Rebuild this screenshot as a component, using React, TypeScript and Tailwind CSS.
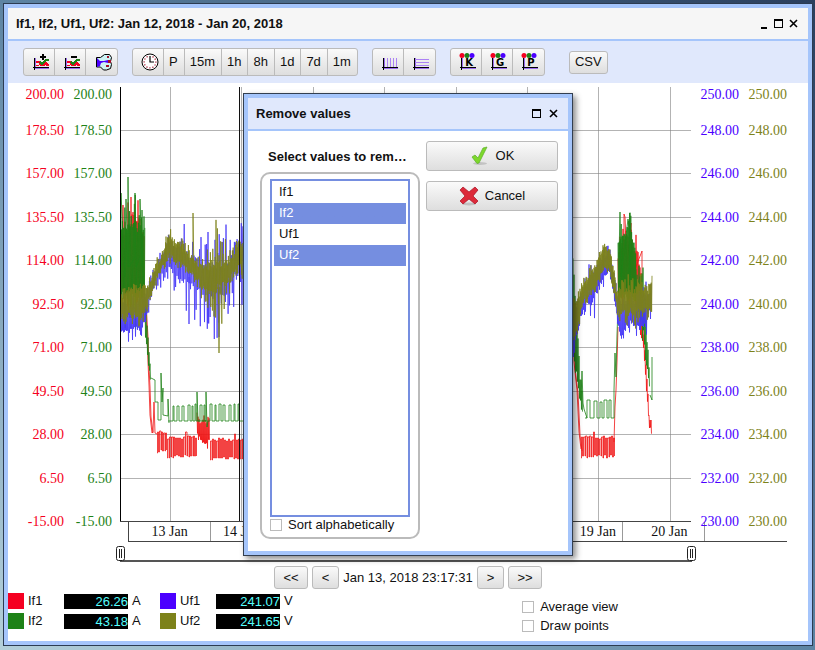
import React, { useState } from 'react';

const RED = '#f50021';
const GREEN = '#1e8217';
const BLUE = '#4b00ff';
const OLIVE = '#7d821a';

const currentTicks = ['200.00', '178.50', '157.00', '135.50', '114.00', '92.50', '71.00', '49.50', '28.00', '6.50', '-15.00'];
const voltageTicks = ['250.00', '248.00', '246.00', '244.00', '242.00', '240.00', '238.00', '236.00', '234.00', '232.00', '230.00'];
const dayLabels = [
  { label: '13 Jan', className: 'col-start-1' },
  { label: '14 Jan', className: 'col-start-2' },
  { label: '19 Jan', className: 'col-start-7' },
  { label: '20 Jan', className: 'col-start-8' },
];

// ---- chart data ----

// [x, top, bottom, jitter] key points of a noisy signal
type Band = [number, number, number, number][];
type Line = [number, number][];

const random = (seed: number) => {
  let s = seed;
  return () => {
    s = (s * 1103515245 + 12345) % 2147483648;
    return s / 2147483648;
  };
};

const noise = (band: Band, seed: number, step = 0.5) => {
  const rnd = random(seed);
  const points: string[] = [];
  let up = true;
  for (let i = 0; i < band.length - 1; i++) {
    const [x0, t0, b0, j0] = band[i];
    const [x1, t1, b1, j1] = band[i + 1];
    for (let x = x0; x < x1; x += step) {
      const k = (x - x0) / (x1 - x0);
      const jitter = j0 + (j1 - j0) * k;
      const edge = up ? t0 + (t1 - t0) * k : b0 + (b1 - b0) * k;
      const swing = jitter * Math.pow(rnd(), 3);
      const y = up ? edge + 4 - rnd() * 6 - swing : edge - 4 + rnd() * 6 + swing;
      points.push(`${x.toFixed(1)} ${y.toFixed(1)}`);
      up = !up;
    }
  }
  return 'M' + points.join('L');
};

const line = (points: Line) => 'M' + points.map(([x, y]) => `${x} ${y}`).join('L');

// square pulses on a base line
const pulses = (from: number, to: number, base: number, top: number, seed: number) => {
  const rnd = random(seed);
  let d = `M${from} ${base}`;
  let x = from;
  while (x < to - 5) {
    x += 2 + Math.round(rnd() * 3);
    d += `H${x}V${top + Math.round(rnd() * 2)}`;
    x += 1 + Math.round(rnd() * 2);
    d += `H${x}V${base}`;
  }
  return d + `H${to}`;
};

// fast on/off switching, drawn as a comb
const comb = (from: number, to: number, top: number, bottom: number, seed: number) => {
  const rnd = random(seed);
  let d = `M${from} ${bottom}`;
  for (let x = from; x < to; x += 2) {
    const high = rnd() > 0.92 ? top - 7 : top - Math.round(rnd() * 3);
    d += `H${x + 0.5}V${high}H${x + (rnd() > 0.35 ? 1.5 : 2)}V${bottom - Math.round(rnd() * 3)}`;
  }
  return d;
};

const redPaths = [
  noise([[0, 155, 205, 35], [14, 130, 205, 40], [25, 150, 215, 20]], 7),
  line([[25, 215], [27, 248], [28, 275], [29, 298], [30, 328], [32, 346], [33, 345], [34, 315], [35, 346], [37, 347]]),
  line([[26, 215], [28, 250], [29, 280], [30, 300], [31, 330], [33, 346]]),
  comb(37, 47, 347, 366, 21),
  comb(47, 77, 352, 371, 22),
  noise([[77, 332, 350, 12], [90, 336, 354, 6]], 23),
  comb(90, 123, 354, 373, 24),
  line([[453, 230], [454, 275], [457, 303], [459, 345], [461, 362]]),
  line([[454, 240], [455, 282], [458, 306], [460, 348], [462, 364]]),
  comb(461, 494, 352, 371, 25),
  line([[494, 355], [495, 320], [496, 303], [497, 275], [498, 240]]),
  noise([[498, 170, 205, 30], [506, 150, 205, 25], [516, 165, 210, 25], [522, 190, 235, 20]], 26),
  line([[504, 190], [504, 127], [505, 130], [507, 180], [511, 136], [512, 190], [522, 164], [522, 230]]),
  noise([[520, 225, 245, 5], [524, 250, 265, 6], [527, 290, 310, 6], [529, 325, 338, 4], [532, 340, 348, 1]], 27),
];

const greenPaths = [
  noise([[0, 145, 205, 30], [12, 138, 205, 42], [25, 145, 215, 30]], 3, 0.4),
  line([[1, 180], [1, 106], [5, 190], [6, 112], [8, 180], [8, 90], [9, 180], [15, 170], [15, 106], [16, 180], [20, 170], [20, 112], [22, 180], [22, 123], [23, 200]]),
  noise([[25, 210, 240, 10], [28, 250, 275, 6], [31, 285, 294, 3]], 5),
  line([[31, 291], [35, 293], [35, 315], [38, 315], [38, 333], [41, 333], [41, 305], [41, 286], [42, 315], [43, 301], [43, 328], [48, 329], [48, 312], [49, 336]]),
  pulses(48, 123, 334, 317, 31),
  line([[77, 334], [77, 305], [78, 334], [86, 334], [86, 305], [87, 340], [88, 334]]),
  noise([[453, 190, 250, 20], [457, 230, 290, 10], [460, 290, 315, 6], [463, 310, 325, 4]], 33),
  line([[461, 313], [462, 284], [463, 316], [464, 322], [467, 331]]),
  pulses(465, 494, 331, 313, 43),
  line([[494, 331], [494, 303], [495, 266], [496, 290], [497, 248], [498, 220]]),
  noise([[498, 155, 210, 10], [502, 150, 208, 20], [510, 143, 208, 20], [516, 165, 215, 8]], 34, 0.4),
  line([[499, 170], [500, 125], [501, 190], [508, 132], [509, 140], [510, 190]]),
  noise([[516, 195, 220, 12], [523, 185, 240, 20], [526, 240, 270, 8], [530, 290, 308, 4]], 35),
  line([[530, 308], [532, 313], [532, 270]]),
];

const bluePaths = [
  noise([[0, 215, 238, 8], [8, 220, 246, 12], [20, 215, 242, 10], [28, 205, 225, 12]], 11),
  noise([[28, 203, 225, 6], [33, 190, 205, 8], [40, 175, 190, 14], [50, 155, 182, 16], [60, 165, 192, 30], [74, 172, 198, 36], [88, 180, 212, 40], [106, 180, 205, 50], [115, 160, 185, 40], [123, 160, 195, 30]], 12, 0.7),
  line([[69, 190], [69, 237], [69, 180]]),
  line([[88, 190], [88, 236], [88, 190]]),
  line([[99, 200], [99, 250], [99, 200]]),
  noise([[453, 235, 270, 10], [458, 215, 240, 12], [465, 198, 215, 26], [473, 188, 210, 30], [481, 172, 195, 18], [489, 168, 185, 14], [493, 185, 202, 12], [497, 205, 230, 10]], 13),
  noise([[497, 210, 235, 8], [501, 220, 248, 12], [510, 215, 235, 14], [520, 215, 240, 20], [526, 210, 235, 20], [532, 200, 220, 10]], 14),
];

const olivePaths = [
  noise([[0, 210, 230, 12], [10, 205, 226, 12], [20, 200, 232, 12], [28, 200, 220, 10]], 15, 0.4),
  noise([[28, 200, 215, 6], [34, 183, 198, 8], [40, 172, 185, 8], [46, 158, 175, 8], [49, 145, 168, 6], [54, 160, 174, 8], [62, 155, 175, 8], [68, 165, 184, 8], [75, 176, 190, 8], [88, 182, 205, 22], [97, 175, 200, 45], [106, 180, 198, 35], [114, 170, 185, 12], [119, 155, 174, 8], [123, 158, 185, 8]], 16, 0.4),
  line([[73, 180], [73, 126], [74, 190]]),
  line([[98, 200], [99, 266], [100, 200]]),
  noise([[453, 215, 255, 8], [458, 212, 235, 10], [463, 195, 215, 6], [470, 188, 205, 8], [477, 176, 198, 6], [483, 160, 182, 5], [489, 163, 180, 5], [493, 180, 200, 4], [497, 205, 222, 6]], 17, 0.4),
  noise([[497, 205, 228, 6], [510, 205, 225, 22], [522, 200, 222, 16], [528, 205, 225, 10], [532, 190, 218, 10]], 18, 0.4),
];

const series = [
  { color: '#f01414', paths: redPaths },
  { color: GREEN, paths: greenPaths },
  { color: '#4638f8', paths: bluePaths },
  { color: OLIVE, paths: olivePaths },
];

const gridY = [43.5, 86.5, 130.5, 173.5, 217.5, 260.5, 304.5, 347.5, 391.5];
const gridX = [50.5, 121.5, 193.5, 264.5, 336.5, 407.5, 478.5, 550.5];

const Plot = () => (
  <svg viewBox="0 0 571 435" preserveAspectRatio="none" className="block h-[435px] w-full overflow-hidden">
    <g stroke="#808080" strokeOpacity="0.6" fill="none">
      {gridY.map((y) => (
        <path key={y} d={`M0 ${y}H571`} />
      ))}
      {gridX.map((x) => (
        <path key={x} d={`M${x} 0V435`} />
      ))}
    </g>
    {series.map((s) => (
      <g key={s.color} stroke={s.color} strokeOpacity="0.8" fill="none" strokeLinejoin="bevel">
        {s.paths.map((d, i) => (
          <path key={i} d={d} />
        ))}
      </g>
    ))}
    <path d="M.5 0V435" stroke="#000" />
    <path d="M119.5 0V435" stroke="#111" />
    <path d="M0 434.5H571" stroke="#444" />
  </svg>
);

// ---- icons ----

const AxisIcon = ({ children }: { children?: React.ReactNode }) => (
  <svg width="18" height="18" viewBox="0 0 18 18" shapeRendering="crispEdges">
    <path d="M3 5h1v11H3zM2 15h15v1H2z" fill="#9a6cf0" />
    <path d="M2 5h1v12H2zM1 14h16v1H1z" fill="#000" />
    {children}
  </svg>
);

const ChartLines = () => (
  <g fill="none">
    <path d="M4 9h3l2 3h3l2-2 2 2h1" stroke={RED} strokeWidth="2" />
    <path d="M4 12h3l2-3 3 1 2 2h2" stroke={RED} />
    <path d="M8 9l2 2 2-2 2-2h3" stroke={GREEN} strokeWidth="2" />
  </g>
);

const AddIcon = () => (
  <AxisIcon>
    <ChartLines />
    <path d="M10 1h2v2h2v2h-2v2h-2V5H8V3h2z" fill="#000" />
  </AxisIcon>
);

const RemoveIcon = () => (
  <AxisIcon>
    <ChartLines />
    <path d="M8 3h6v2H8z" fill="#000" />
  </AxisIcon>
);

const PaletteIcon = () => (
  <svg width="18" height="18" viewBox="0 0 18 18">
    <path d="M1.500 4.500h4l4-3h5l2 3-1 4 1 3-1 4-4 1.500h-3l-3-3h-4z" fill="#cdf3f5" stroke="#000" />
    <path d="M2 5l3 3h4l4-1v3l-4-1-3 1-1 3-3 1z" fill={BLUE} />
    <path d="M12 3h2v2h-2zM13 7h3v3h-3zM11 12h3v2h-3z" fill="#a3122c" />
  </svg>
);

const ClockIcon = () => (
  <svg width="18" height="18" viewBox="0 0 18 18">
    <circle cx="9" cy="9" r="8" fill="#fff" stroke="#000" />
    <g fill="#a3122c">
      {[30, 60, 90, 120, 150, 180, 210, 240, 270, 300, 330].map((a) => (
        <rect key={a} x="8.5" y="2.5" width="1.2" height="1.2" transform={`rotate(${a} 9 9)`} />
      ))}
    </g>
    <path d="M9 3v6h4" fill="none" stroke="#000" strokeWidth="1.2" />
  </svg>
);

const VerticalGridIcon = () => (
  <AxisIcon>
    <path d="M6 5h1v9H6zM9 5h1v9H9zM12 5h1v9h-1zM15 5h1v9h-1z" fill="#ac82f5" />
  </AxisIcon>
);

const HorizontalGridIcon = () => (
  <AxisIcon>
    <path d="M3 6h14v1H3zM3 9h14v1H3zM3 12h14v1H3z" fill="#ac82f5" />
  </AxisIcon>
);

const LetterIcon = ({ letter }: { letter: string }) => (
  <AxisIcon>
    <g shapeRendering="auto">
      <circle cx="3" cy="2.5" r="2.5" fill={RED} />
      <circle cx="8" cy="2.5" r="2.5" fill={GREEN} />
      <circle cx="13" cy="2.5" r="2.5" fill={BLUE} />
    </g>
    <text x="10" y="13" textAnchor="middle" fontFamily="DejaVu Sans" fontWeight="bold" fontSize="10" fill="#000">
      {letter}
    </text>
  </AxisIcon>
);

const CheckIcon = () => (
  <svg width="20" height="20" viewBox="0 0 20 20">
    <ellipse cx="10" cy="17.5" rx="7" ry="1.5" fill="#000" fillOpacity="0.15" />
    <path d="M2 11l3-2 3 3 5-10 4-1-8 16-2 .5z" fill="#7ed82c" stroke="#5cae2a" strokeWidth="0.7" />
  </svg>
);

const CrossIcon = () => (
  <svg width="20" height="20" viewBox="0 0 20 20">
    <ellipse cx="10" cy="18" rx="7" ry="1.5" fill="#000" fillOpacity="0.15" />
    <path d="M1 4l3-3 6 5 6-5 3 3-5 6 5 5-3 3-6-5-6 5-3-3 5-5z" fill="#dc2a3a" stroke="#a80f22" strokeWidth="0.7" />
  </svg>
);

const MinimizeIcon = () => (
  <svg width="8" height="10" viewBox="0 0 8 10" shapeRendering="crispEdges">
    <path d="M1 8h6v2H1z" fill="#000" />
  </svg>
);

const MaximizeIcon = () => (
  <svg width="9" height="9" viewBox="0 0 9 9" shapeRendering="crispEdges">
    <path d="M0 0h9v9H0zM1 2v6h7V2z" fill="#000" fillRule="evenodd" />
  </svg>
);

const CloseIcon = () => (
  <svg width="9" height="9" viewBox="0 0 9 9">
    <path d="M1 1l7 7M8 1L1 8" stroke="#000" strokeWidth="1.6" />
  </svg>
);

// ---- controls ----

const buttonFace = 'bg-linear-to-b from-[#fafafa] to-[#dedede] border-[#bbb]';

const ToolGroup = ({ children }: { children: React.ReactNode }) => (
  <div className="flex h-7 divide-x divide-[#bbb] overflow-hidden rounded-[3px] border border-[#bbb] bg-linear-to-b from-[#fafafa] to-[#dedede]">
    {children}
  </div>
);

const IconTool = ({ label, children }: { label: string; children: React.ReactNode }) => (
  <button type="button" aria-label={label} className="flex w-[31px] items-center justify-center pl-1">
    {children}
  </button>
);

const TextTool = ({ children }: { children: React.ReactNode }) => (
  <button type="button" className="pr-1.5 pl-[5px]">
    {children}
  </button>
);

const NavButton = ({ wide, children }: { wide?: boolean; children: React.ReactNode }) => (
  <button type="button" className={`h-[23px] rounded-[3px] border ${buttonFace} ${wide ? 'w-[34px]' : 'w-[27px]'}`}>
    {children}
  </button>
);

const CheckBox = ({ id, label }: { id: string; label: string }) => (
  <div className="flex items-center gap-1.5">
    <input id={id} type="checkbox" className="size-3 appearance-none border border-[#bbb] bg-white checked:bg-[#758ee0]" />
    <label htmlFor={id}>{label}</label>
  </div>
);

const AxisColumn = ({ ticks, className }: { ticks: string[]; className: string }) => (
  <div className={`row-span-2 row-start-1 flex h-[457px] flex-col text-right font-['Liberation_Serif',serif] text-sm leading-4 ${className}`}>
    <span className="h-[22px]">{ticks[0]}</span>
    {ticks.slice(1).map((tick) => (
      <span key={tick} className="flex flex-1 items-center justify-end">
        {tick}
      </span>
    ))}
  </div>
);

const Reading = ({ swatch, name, value, unit }: { swatch: string; name: string; value: string; unit: string }) => (
  <div className="flex w-[152px] items-center">
    <span className={`size-4 ${swatch}`} />
    <span className="w-10 pl-1">{name}</span>
    <output className="h-[15px] w-16 bg-black text-right leading-[15px] text-[#5ff]">{value}</output>
    <span className="pl-1">{unit}</span>
  </div>
);

const SliderHandle = () => (
  <svg width="9" height="15" viewBox="0 0 9 15">
    <rect x="0.5" y="0.5" width="8" height="14" rx="2" fill="#fff" stroke="#222" />
    <path d="M3.5 3v9M5.5 3v9" stroke="#222" />
  </svg>
);

const RemoveDialog = () => {
  const [selected, setSelected] = useState(['If2', 'Uf2']);

  return (
    <section
      role="dialog"
      aria-labelledby="remove-title"
      className="absolute top-[93px] left-[243px] w-[330px] border border-[#333f50] bg-white shadow-[3px_3px_6px_rgba(0,0,0,0.45)]"
    >
      <div className="border-4 border-[#a5c5fb]">
        <header className="flex h-[33px] items-center gap-2 border-b-2 border-[#a5c5fb] bg-[#e0e8fc] pr-2.5 pl-2">
          <h2 id="remove-title" className="flex-1 font-bold">
            Remove values
          </h2>
          <button type="button" aria-label="Maximize"><MaximizeIcon /></button>
          <button type="button" aria-label="Close"><CloseIcon /></button>
        </header>
        <div className="flex items-start gap-1.5 px-2.5 pt-2.5 pb-3">
          <div className="w-[162px] pl-0.5">
            <label htmlFor="values" className="block h-[31px] w-[150px] truncate pl-2 leading-8 font-bold">
              Select values to remove
            </label>
            <div className="h-[367px] rounded-[10px] border-2 border-[#bbb] px-2 pt-[5px]">
              <select
                id="values"
                multiple
                value={selected}
                onChange={(e) => setSelected(Array.from(e.target.selectedOptions, (o) => o.value))}
                className="block h-[338px] w-full appearance-none overflow-hidden border-2 border-[#758ee0] px-0.5 py-px outline-none"
              >
                {['If1', 'If2', 'Uf1', 'Uf2'].map((value) => (
                  <option
                    key={value}
                    value={value}
                    className="h-[21px] px-[5px] pt-0.5 pb-0 leading-[19px] checked:bg-linear-to-b checked:from-[#758ee0] checked:to-[#758ee0] checked:[-webkit-text-fill-color:#fff]"
                  >
                    {value}
                  </option>
                ))}
              </select>
              <CheckBox id="sort" label="Sort alphabetically" />
            </div>
          </div>
          <div className="flex w-[132px] flex-col gap-2.5">
            <button type="button" className={`flex h-[30px] items-center justify-center gap-1.5 rounded-[3px] border ${buttonFace}`}>
              <CheckIcon />
              OK
            </button>
            <button type="button" className={`flex h-[30px] items-center justify-center gap-1.5 rounded-[3px] border ${buttonFace}`}>
              <CrossIcon />
              Cancel
            </button>
          </div>
        </div>
      </div>
    </section>
  );
};

export default function App() {
  return (
    <div className="relative flex min-h-screen bg-linear-to-tr from-[#b4d0da] via-[#5d84a3] to-[#2a3f5e] pt-[3px] pr-0.5 pb-1 pl-[3px] font-['Liberation_Sans',sans-serif] text-[13px] leading-4 text-[#111]">
      <main className="flex flex-1 flex-col border border-[#2c3c52] bg-white">
        <div className="flex-1 border-4 border-[#a5c5fb]">
          <header className="flex h-[33px] items-center gap-1.5 border-b-2 border-[#a5c5fb] bg-[#f6f6f6] pr-2.5 pl-2">
            <h1 className="flex-1 font-bold">If1, If2, Uf1, Uf2: Jan 12, 2018 - Jan 20, 2018</h1>
            <button type="button" aria-label="Minimize"><MinimizeIcon /></button>
            <button type="button" aria-label="Maximize"><MaximizeIcon /></button>
            <button type="button" aria-label="Close"><CloseIcon /></button>
          </header>

          <div className="flex h-[42px] items-center gap-3.5 bg-[#e0e8fc] px-[15px]">
            <ToolGroup>
              <IconTool label="Add values"><AddIcon /></IconTool>
              <IconTool label="Remove values"><RemoveIcon /></IconTool>
              <IconTool label="Colors"><PaletteIcon /></IconTool>
            </ToolGroup>
            <ToolGroup>
              <IconTool label="Time"><ClockIcon /></IconTool>
              {['P', '15m', '1h', '8h', '1d', '7d', '1m'].map((range) => (
                <TextTool key={range}>{range}</TextTool>
              ))}
            </ToolGroup>
            <ToolGroup>
              <IconTool label="Vertical grid"><VerticalGridIcon /></IconTool>
              <IconTool label="Horizontal grid"><HorizontalGridIcon /></IconTool>
            </ToolGroup>
            <ToolGroup>
              <IconTool label="K"><LetterIcon letter="K" /></IconTool>
              <IconTool label="G"><LetterIcon letter="G" /></IconTool>
              <IconTool label="P"><LetterIcon letter="P" /></IconTool>
            </ToolGroup>
            <button type="button" className={`ml-2.5 h-[23px] rounded-[3px] border px-[5px] ${buttonFace}`}>
              CSV
            </button>
          </div>

          <div className="mr-[21px] grid grid-cols-[56px_56px_1fr_48px_48px] grid-rows-[435px_20px] pt-1">
            <div className="col-span-3 col-start-3 row-start-2 grid">
              <div className="col-start-1 row-start-1 ml-2 grid grid-cols-8 divide-x divide-[#999] border-b border-l border-[#444]">
                {[0, 1, 2, 3, 4, 5, 6, 7].map((segment) => (
                  <span key={segment} />
                ))}
              </div>
              <div className="col-start-1 row-start-1 mr-[82px] ml-[14px] grid grid-cols-8 font-['Liberation_Serif',serif] text-sm leading-5">
                {dayLabels.map((day) => (
                  <span key={day.label} className={`text-center ${day.className}`}>
                    {day.label}
                  </span>
                ))}
              </div>
            </div>
            <div className="col-start-3 row-start-1">
              <Plot />
            </div>
            <AxisColumn ticks={currentTicks} className="col-start-1 text-[#f50021]" />
            <AxisColumn ticks={currentTicks} className="col-start-2 pr-2 text-[#1e8217]" />
            <AxisColumn ticks={voltageTicks} className="col-start-4 text-[#4b00ff]" />
            <AxisColumn ticks={voltageTicks} className="col-start-5 text-[#7d821a]" />
          </div>

          <div className="mt-1 mr-28 ml-[108px] flex h-4 justify-between bg-linear-to-b from-transparent from-88% to-[#555] to-88% bg-size-[calc(100%-8px)_100%] bg-center bg-no-repeat">
            <SliderHandle />
            <SliderHandle />
          </div>

          <div className="mt-1 flex items-center justify-center gap-1">
            <NavButton wide>&lt;&lt;</NavButton>
            <NavButton>&lt;</NavButton>
            <time className="w-[130px] text-center">Jan 13, 2018 23:17:31</time>
            <NavButton>&gt;</NavButton>
            <NavButton wide>&gt;&gt;</NavButton>
          </div>

          <div className="mt-1 flex justify-between">
            <div className="grid grid-cols-2 content-start gap-y-1">
              <Reading swatch="bg-[#f50021]" name="If1" value="26.26" unit="A" />
              <Reading swatch="bg-[#4b00ff]" name="Uf1" value="241.07" unit="V" />
              <Reading swatch="bg-[#1e8217]" name="If2" value="43.18" unit="A" />
              <Reading swatch="bg-[#7d821a]" name="Uf2" value="241.65" unit="V" />
            </div>
            <div className="mr-[190px] flex flex-col gap-[3px] pt-1.5">
              <CheckBox id="average" label="Average view" />
              <CheckBox id="points" label="Draw points" />
            </div>
          </div>
        </div>
      </main>
      <RemoveDialog />
    </div>
  );
}
